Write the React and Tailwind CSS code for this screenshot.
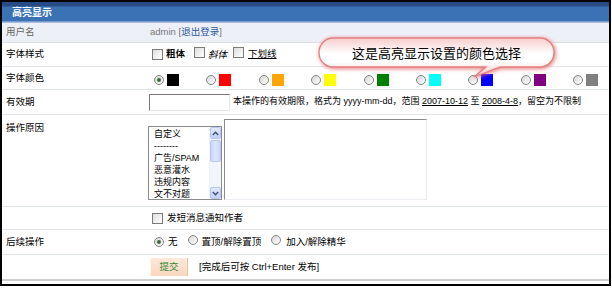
import React from "react";

const FONT = { fontFamily: '"Liberation Sans", "Noto Sans CJK SC", sans-serif' };

function Radio({ checked }) {
  return (
    <span className="inline-flex w-[10px] h-[10px] shrink-0 rounded-full border border-[#858585] bg-[linear-gradient(135deg,#d6d6d6,#ffffff)] items-center justify-center">
      {checked && <span className="w-[4px] h-[4px] rounded-full bg-[#3d6b3d]" />}
    </span>
  );
}

function Check() {
  return <span className="inline-block w-[11px] h-[11px] shrink-0 border border-[#7b7b7b] bg-[linear-gradient(135deg,#dedede,#ffffff)]" />;
}

const colors = ["#000000", "#ff0000", "#ffa500", "#ffff00", "#008000", "#00ffff", "#0000ff", "#800080", "#808080"];

function Row({ label, h, children, bg = "bg-white", top = false }) {
  return (
    <div className={`flex ${h} ${bg} border-b border-[#e1e5ef] ${top ? "items-start" : "items-center"}`}>
      <div className={`w-[146px] shrink-0 pl-[4px] text-[9.5px] text-black ${top ? "pt-[6px]" : ""}`}>{label}</div>
      <div className={`flex-1 h-full flex ${top ? "items-start" : "items-center"}`}>{children}</div>
    </div>
  );
}

export default function App() {
  return (
    <div className="w-[612px] h-[288px] bg-white relative" style={FONT}>
      <div className="w-[611px] h-[286px] border-2 border-black flex flex-col bg-white overflow-hidden">
        <div className="h-[21px] shrink-0 flex items-center pl-[10px] text-[10px] font-bold text-white bg-[linear-gradient(#284b86_0%,#284b86_18%,#3a72b5_24%,#3a72b5_90%,#a9bedc_95%,#a9bedc_100%)]">
          高亮显示
        </div>

        <div className="flex h-[20px] items-center bg-[#eef0f8] border-b border-[#dcdfe8]">
          <div className="w-[146px] shrink-0 pl-[4px] text-[9.5px] text-[#666]">用户名</div>
          <div className="pl-[2px] text-[9.5px] text-[#777]">
            admin [<span className="text-[#2a5a9c]">退出登录</span>]
          </div>
        </div>

        <Row label="字体样式" h="h-[24px]">
          <div className="flex items-center pl-[4px] text-[9.5px] text-black">
            <Check />
            <span className="ml-[3px] font-bold">粗体</span>
            <span className="ml-[9px]"><Check /></span>
            <span className="ml-[3px] italic" style={{ fontFamily: '"Noto Sans CJK SC", serif' }}>斜体</span>
            <span className="ml-[6px]"><Check /></span>
            <span className="ml-[4px] underline">下划线</span>
          </div>
        </Row>

        <Row label="字体颜色" h="h-[23px]">
          <div className="flex items-center pl-[6px] pt-[4px]">
            {colors.map((c, i) => (
              <div key={c} className="w-[52.4px] flex items-center shrink-0">
                <Radio checked={i === 0} />
                <span className="ml-[3px] w-[12px] h-[12px]" style={{ backgroundColor: c }} />
              </div>
            ))}
          </div>
        </Row>

        <Row label="有效期" h="h-[25px]">
          <div className="flex items-center pl-[1px] text-black">
            <span className="w-[81px] h-[17px] bg-white border border-t-[#7a7a7a] border-l-[#7a7a7a] border-b-[#e4e4e4] border-r-[#e4e4e4]" />
            <span className="ml-[3px] text-[9px]">
              本操作的有效期限，格式为 yyyy-mm-dd，范围 <span className="underline">2007-10-12</span> 至 <span className="underline">2008-4-8</span>，留空为不限制
            </span>
          </div>
        </Row>

        <Row label="操作原因" h="h-[92px]" top>
          <div className="flex items-end pt-[5px] h-[85px]">
            <div className="w-[74px] h-[74px] border border-[#8b8b8b] bg-white flex">
              <div className="flex-1 pl-[5px] pt-[1px] text-[9px] leading-[12px] text-black whitespace-nowrap overflow-hidden">
                <div>自定义</div>
                <div>--------</div>
                <div>广告/SPAM</div>
                <div>恶意灌水</div>
                <div>违规内容</div>
                <div>文不对题</div>
              </div>
              <div className="w-[12px] flex flex-col bg-[#f2f5fc] border-l border-[#eef1f8]">
                <div className="h-[12px] rounded-[2px] bg-[linear-gradient(#e1e9fd,#c0d0f8)] border border-[#b7c8f0] flex items-center justify-center">
                  <svg width="7" height="5" viewBox="0 0 7 5"><path d="M0.8 4 L3.5 1.2 L6.2 4" fill="none" stroke="#3c4f80" strokeWidth="1.4" /></svg>
                </div>
                <div className="h-[22px] mt-[1px] rounded-[2px] bg-[linear-gradient(90deg,#c8d7fb,#dbe5fd,#c8d7fb)] border border-[#b9caf2]" />
                <div className="flex-1" />
                <div className="h-[12px] rounded-[2px] bg-[linear-gradient(#e1e9fd,#c0d0f8)] border border-[#b7c8f0] flex items-center justify-center">
                  <svg width="7" height="5" viewBox="0 0 7 5"><path d="M0.8 1 L3.5 3.8 L6.2 1" fill="none" stroke="#3c4f80" strokeWidth="1.4" /></svg>
                </div>
              </div>
            </div>
            <div className="ml-[2px] w-[203px] h-[81px] bg-white border border-t-[#8a8a8a] border-l-[#8a8a8a] border-b-[#eceef4] border-r-[#eceef4]" />
          </div>
        </Row>

        <Row label="" h="h-[23px]">
          <div className="flex items-center pl-[4px] text-[9.5px] text-black">
            <Check />
            <span className="ml-[4px]">发短消息通知作者</span>
          </div>
        </Row>

        <Row label="后续操作" h="h-[25px]">
          <div className="flex items-center pl-[6px] text-[9.5px] text-black">
            <Radio checked />
            <span className="ml-[4px]">无</span>
            <span className="ml-[10px]"><Radio /></span>
            <span className="ml-[4px]">置顶/解除置顶</span>
            <span className="ml-[10px]"><Radio /></span>
            <span className="ml-[5px]">加入/解除精华</span>
          </div>
        </Row>

        <div className="flex h-[26px] items-center border-b-2 border-[#cfcfcf]">
          <div className="w-[146px] shrink-0" />
          <div className="flex items-center pl-[2px] text-[9.5px] text-black">
            <span className="w-[38px] h-[18px] flex items-center justify-center bg-[linear-gradient(#fde9da,#f9d6bf)] border-r border-r-[#e6c89a] border-l border-l-[#fff3ea] text-[#2f8a2f]">
              提交
            </span>
            <span className="ml-[11px]">[完成后可按 Ctrl+Enter 发布]</span>
          </div>
        </div>
      </div>

      <div className="absolute left-[317px] top-[35px] w-[242px] h-[46px]">
        <svg width="242" height="46" viewBox="0 0 242 46" className="absolute inset-0 drop-shadow-[1px_1px_2px_rgba(230,100,100,0.9)]">
          <defs>
            <linearGradient id="bub" x1="0" y1="0" x2="0" y2="1">
              <stop offset="0" stopColor="#f8cccc" />
              <stop offset="0.4" stopColor="#ffffff" />
              <stop offset="0.62" stopColor="#ffffff" />
              <stop offset="1" stopColor="#f4bdbd" />
            </linearGradient>
          </defs>
          <path
            d="M16 3 H223 A14 14.5 0 0 1 223 32 H183 L157 42 L169 32 H16 A14 14.5 0 0 1 16 3 Z"
            fill="url(#bub)"
            stroke="#e67f7f"
            strokeWidth="1.3"
          />
        </svg>
        <div className="absolute left-[2px] top-[3px] w-[235px] h-[29px] flex items-center justify-center text-[13px] text-black" style={{ fontFamily: '"Noto Sans CJK SC", sans-serif' }}>
          这是高亮显示设置的颜色选择
        </div>
      </div>
    </div>
  );
}
